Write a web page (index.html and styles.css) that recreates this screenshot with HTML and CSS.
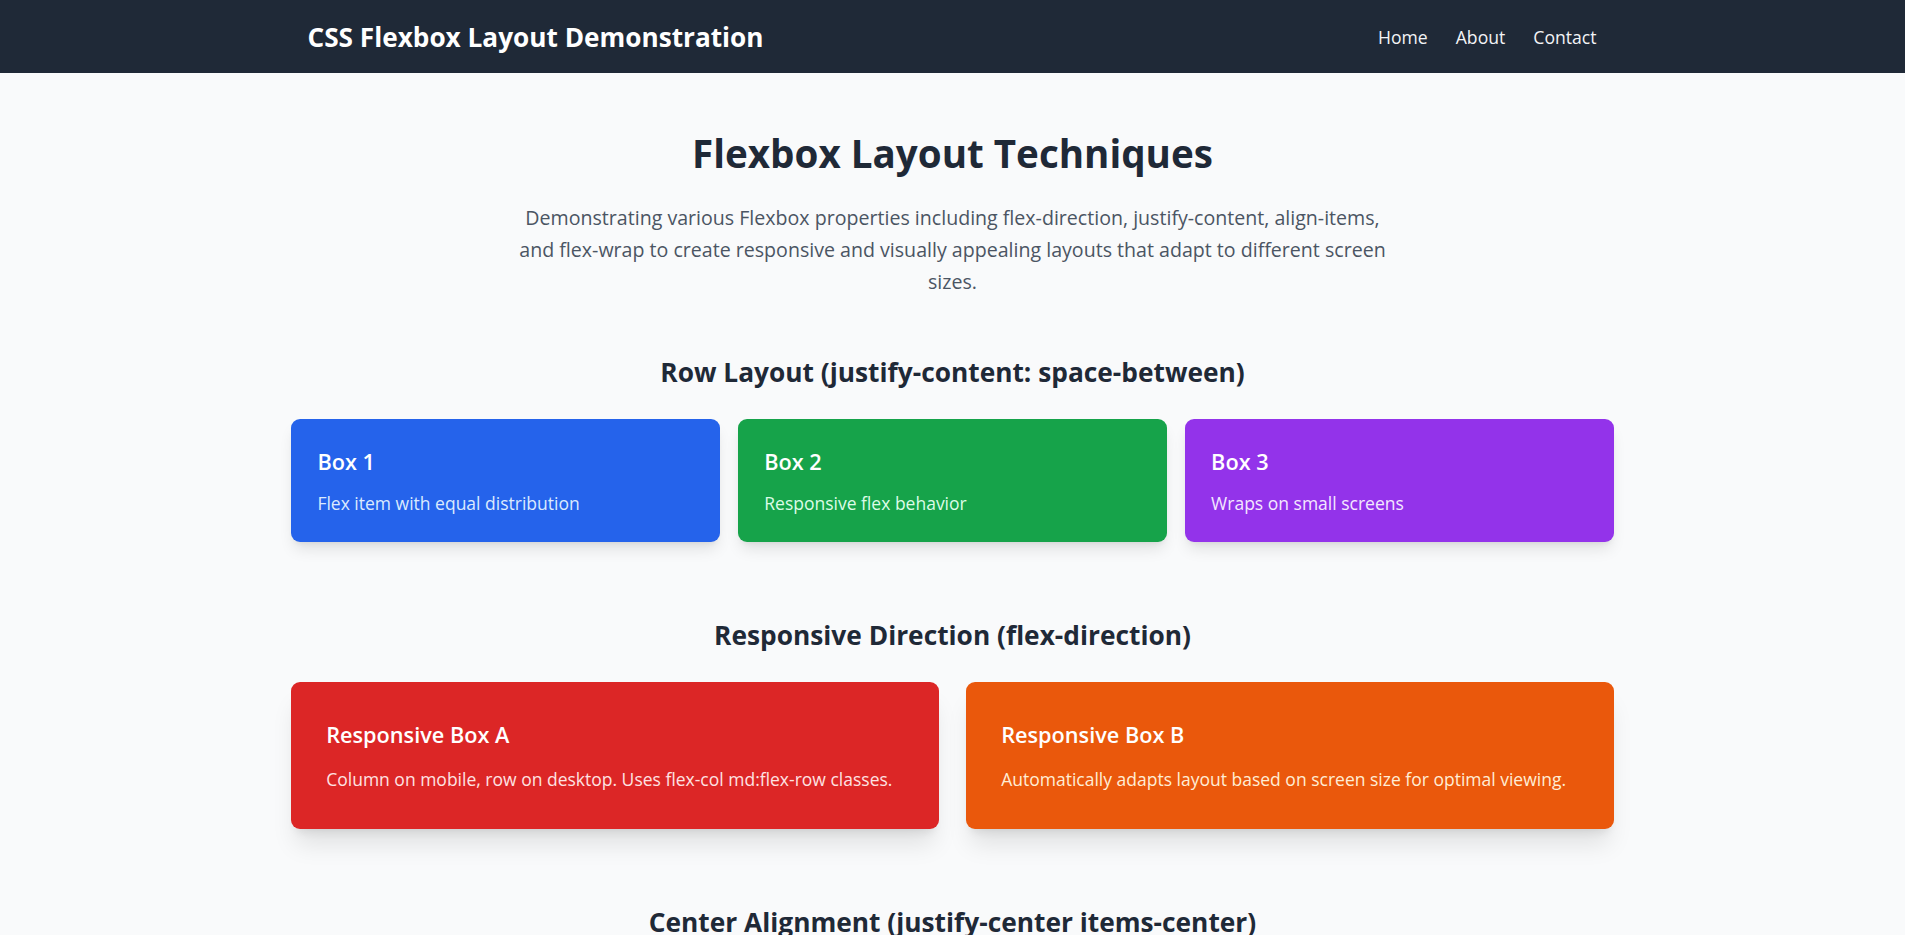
FILE: index.html
```html
<!DOCTYPE html>
<html lang="en">
<head>
<meta charset="utf-8">
<title>CSS Flexbox Layout Demonstration</title>
<link rel="stylesheet" href="styles.css">
</head>
<body>
<header class="topbar">
  <div class="topbar-inner">
    <h1 class="brand">CSS Flexbox Layout Demonstration</h1>
    <nav class="nav">
      <a href="#" class="nav-link">Home</a>
      <a href="#" class="nav-link">About</a>
      <a href="#" class="nav-link">Contact</a>
    </nav>
  </div>
</header>

<main class="main">
  <section class="intro">
    <h2 class="page-title">Flexbox Layout Techniques</h2>
    <p class="lead">Demonstrating various Flexbox properties including flex-direction, justify-content, align-items, and flex-wrap to create responsive and visually appealing layouts that adapt to different screen sizes.</p>
  </section>

  <section class="demo">
    <h3 class="demo-title">Row Layout (justify-content: space-between)</h3>
    <div class="row-between">
      <div class="card card-blue">
        <h4 class="card-title">Box 1</h4>
        <p class="card-text">Flex item with equal distribution</p>
      </div>
      <div class="card card-green">
        <h4 class="card-title">Box 2</h4>
        <p class="card-text">Responsive flex behavior</p>
      </div>
      <div class="card card-purple">
        <h4 class="card-title">Box 3</h4>
        <p class="card-text">Wraps on small screens</p>
      </div>
    </div>
  </section>

  <section class="demo">
    <h3 class="demo-title">Responsive Direction (flex-direction)</h3>
    <div class="row-direction">
      <div class="card card-lg card-red">
        <h4 class="card-title">Responsive Box A</h4>
        <p class="card-text">Column on mobile, row on desktop. Uses flex-col md:flex-row classes.</p>
      </div>
      <div class="card card-lg card-orange">
        <h4 class="card-title">Responsive Box B</h4>
        <p class="card-text">Automatically adapts layout based on screen size for optimal viewing.</p>
      </div>
    </div>
  </section>

  <section class="demo">
    <h3 class="demo-title">Center Alignment (justify-center items-center)</h3>
    <div class="row-center">
      <div class="card card-lg card-teal">
        <h4 class="card-title">Centered Content</h4>
        <p class="card-text">Perfectly centered both horizontally and vertically.</p>
      </div>
    </div>
  </section>
</main>
</body>
</html>
```

FILE: styles.css
```css
html {
  scrollbar-width: none;
}
html::-webkit-scrollbar {
  display: none;
}
* {
  box-sizing: border-box;
}
body {
  margin: 0;
  background: #f9fafb;
  color: #1f2937;
  font-family: "Open Sans", "Noto Sans", "Liberation Sans", sans-serif;
}

.topbar {
  background: #1f2937;
  height: 73px;
}
.topbar-inner {
  width: 1290px;
  margin: 0 auto;
  height: 100%;
  display: flex;
  align-items: center;
  justify-content: space-between;
}
.brand {
  margin: 0;
  color: #ffffff;
  font-size: 26.2px;
  font-weight: 700;
  line-height: 34px;
}
.nav {
  display: flex;
  gap: 28px;
  margin-right: 1px;
}
.nav-link {
  color: #f3f4f6;
  text-decoration: none;
  font-size: 17.6px;
  line-height: 26px;
}

.main {
  width: 1323px;
  margin: 0 auto;
  padding-top: 58px;
}

.intro {
  display: flex;
  flex-direction: column;
  align-items: center;
  margin-bottom: 57px;
}
.page-title {
  margin: 0 0 27px;
  font-size: 38.6px;
  line-height: 44px;
  font-weight: 700;
  color: #1f2937;
}
.lead {
  margin: 0;
  max-width: 880px;
  text-align: center;
  font-size: 19.6px;
  line-height: 32px;
  color: #4b5563;
}

.demo {
  margin-bottom: 76px;
}
.demo-title {
  margin: 0 0 29px;
  text-align: center;
  font-size: 26.3px;
  line-height: 35px;
  font-weight: 700;
  color: #1f2937;
}

.row-between {
  display: flex;
  justify-content: space-between;
  gap: 17.6px;
}
.row-between .card {
  flex: 1 1 0;
}
.row-direction {
  display: flex;
  gap: 27px;
}
.row-direction .card {
  flex: 1 1 0;
}
.row-center {
  display: flex;
  justify-content: center;
  align-items: center;
  min-height: 200px;
}

.card {
  border-radius: 9px;
  padding: 28.4px 26.4px 26.4px;
  color: #ffffff;
  box-shadow: 0 10px 15px -3px rgba(0, 0, 0, 0.1), 0 4px 6px -4px rgba(0, 0, 0, 0.1);
}
.card-title {
  margin: 0 0 11.5px;
  font-size: 21.7px;
  line-height: 30.8px;
  font-weight: 600;
}
.card-text {
  margin: 0;
  font-size: 17.5px;
  line-height: 26.4px;
}
.card-lg {
  padding: 38px 35.2px 37.3px;
  box-shadow: 0 20px 25px -5px rgba(0, 0, 0, 0.1), 0 8px 10px -6px rgba(0, 0, 0, 0.1);
}
.card-lg .card-title {
  margin-bottom: 14.5px;
}

.card-blue { background: #2563eb; }
.card-blue .card-text { color: #dbeafe; }
.card-green { background: #16a34a; }
.card-green .card-text { color: #dcfce7; }
.card-purple { background: #9333ea; }
.card-purple .card-text { color: #f3e8ff; }
.card-red { background: #dc2626; }
.card-red .card-text { color: #fee2e2; }
.card-orange { background: #ea580c; }
.card-orange .card-text { color: #ffedd5; }
.card-teal { background: #0d9488; }
.card-teal .card-text { color: #ccfbf1; }
```
